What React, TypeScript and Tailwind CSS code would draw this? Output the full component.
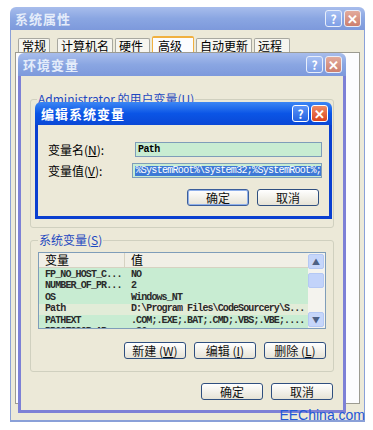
import type { ReactNode } from "react";

const cjk = { fontFamily: '"Noto Sans CJK SC", "Liberation Sans", sans-serif' };
const mono = { fontFamily: '"Liberation Mono", "Noto Sans CJK SC", monospace' };

function CaptionButtons({ active }: { active: boolean }) {
  return (
    <div className="flex gap-[2px]">
      <div
        className={
          active
            ? "flex h-[17px] w-[17px] items-center justify-center rounded-[3px] border border-white bg-gradient-to-b from-[#5a93f8] to-[#2462e0] text-[12px] font-bold leading-none text-white"
            : "flex h-[17px] w-[17px] items-center justify-center rounded-[3px] border border-[#e8eefa] bg-gradient-to-b from-[#a6bff2] to-[#7f9fe6] text-[12px] font-bold leading-none text-white"
        }
      >
        ?
      </div>
      <div
        className={
          active
            ? "flex h-[17px] w-[17px] items-center justify-center rounded-[3px] border border-white bg-gradient-to-b from-[#f08a62] to-[#d8421c] text-[13px] font-bold leading-none text-white"
            : "flex h-[17px] w-[17px] items-center justify-center rounded-[3px] border border-[#e8eefa] bg-gradient-to-b from-[#e3ab9c] to-[#cc7f6e] text-[13px] font-bold leading-none text-white"
        }
      >
        ✕
      </div>
    </div>
  );
}

function TitleBar({ title, active }: { title: string; active: boolean }) {
  return (
    <div
      className={
        active
          ? "flex h-[23px] shrink-0 items-center justify-between rounded-t-[6px] bg-gradient-to-b from-[#3c86f4] via-[#0b55e6] to-[#0a48d6] pl-[6px] pr-[4px]"
          : "flex h-[23px] shrink-0 items-center justify-between rounded-t-[6px] bg-gradient-to-b from-[#a8bdec] via-[#8aa6e2] to-[#7d99dc] pl-[5px] pr-[4px]"
      }
    >
      <span
        className={
          active
            ? "text-[13px] font-bold tracking-[1px] text-white"
            : "text-[13px] font-bold tracking-[1px] text-[#e4ecfa]"
        }
      >
        {title}
      </span>
      <CaptionButtons active={active} />
    </div>
  );
}

function XpButton({ children, className = "" }: { children: ReactNode; className?: string }) {
  return (
    <div
      className={
        "flex h-[17px] w-[62px] items-center justify-center rounded-[3px] border border-[#2f4f7f] bg-gradient-to-b from-[#ffffff] to-[#e6e3d6] text-[12px] leading-none text-[#111] " +
        className
      }
    >
      {children}
    </div>
  );
}

function Tab({ label, className = "" }: { label: string; className?: string }) {
  return (
    <div
      className={
        "h-[14px] rounded-t-[2px] border border-b-0 border-[#a8a8a0] bg-[#f6f5ef] px-[3px] pt-[1px] " +
        className
      }
    >
      {label}
    </div>
  );
}

const rows: [string, string][] = [
  ["FP_NO_HOST_C...", "NO"],
  ["NUMBER_OF_PR...", "2"],
  ["OS", "Windows_NT"],
  ["Path", "D:\\Program Files\\CodeSourcery\\S..."],
  ["PATHEXT", ".COM;.EXE;.BAT;.CMD;.VBS;.VBE;...."],
  ["PROCESSOR_AR...", "x86"],
];

export default function App() {
  return (
    <div className="relative h-[430px] w-[373px] overflow-hidden bg-white" style={cjk}>
      {/* 系统属性 (inactive, behind) */}
      <div className="absolute left-[10px] top-[7px] flex h-[415px] w-[355px] flex-col">
        <TitleBar title="系统属性" active={false} />
        <div className="flex flex-1 flex-col border-x border-b-2 border-[#8aa0d8] bg-[#ece9d8] px-[4px] pt-[6px]">
          <div className="flex items-end gap-[2px] pl-[3px] text-[12px] leading-none">
            <Tab label="常规" />
            <Tab label="计算机名" className="ml-[5px]" />
            <Tab label="硬件" className="w-[35px]" />
            <div className="h-[16px] w-[42px] rounded-t-[2px] border-x border-t-2 border-[#f0b040] bg-[#fcfcfe] pl-[5px] pt-[2px]">高级</div>
            <Tab label="自动更新" />
            <Tab label="远程" className="w-[36px]" />
          </div>
          <div className="h-[352px] border border-[#9c9b91] bg-[#fcfcfe]" />
        </div>
      </div>

      {/* 环境变量 (inactive) */}
      <div className="absolute left-[18px] top-[53px] flex h-[360px] w-[328px] flex-col">
        <TitleBar title="环境变量" active={false} />
        <div className="flex flex-1 flex-col border-x-[3px] border-b-[3px] border-[#7d80d6] bg-[#ece9d8] px-[9px]">
          <fieldset className="mt-[17px] h-[135px] rounded-[3px] border border-[#d0d0bf] px-[6px]">
            <legend className="px-[1px] text-[12px] leading-none text-[#1f48c0]">Administrator 的用户变量(U)</legend>
          </fieldset>
          <fieldset className="mt-[6px] flex h-[138px] flex-col rounded-[3px] border border-[#d0d0bf] px-[7px]">
            <legend className="px-[1px] text-[12px] leading-none text-[#1f48c0]">
              系统变量(<u>S</u>)
            </legend>
            <div className="mt-[6px] flex h-[77px] border border-[#7f9db9] bg-white">
              <div className="flex flex-1 flex-col overflow-hidden">
                <div className="flex h-[15px] shrink-0 items-center border-b border-[#d6d2c2] bg-[#f1efe6] text-[12px] leading-[14px]">
                  <div className="w-[86px] border-r border-[#d6d2c2] pl-[6px]">变量</div>
                  <div className="pl-[6px]">值</div>
                </div>
                <div className="bg-[#c8ecd2] pt-[1px] text-[10px] font-bold tracking-[-0.9px] text-[#2a2a2a]" style={mono}>
                  {rows.map(([k, v]) => (
                    <div
                      key={k}
                      className={
                        k === "Path"
                          ? "flex h-[11.5px] items-center bg-[#e2ecd8] leading-none"
                          : "flex h-[11.5px] items-center leading-none"
                      }
                    >
                      <div className="w-[86px] pl-[6px]">{k}</div>
                      <div className="pl-[6px]">{v}</div>
                    </div>
                  ))}
                </div>
              </div>
              <div className="flex w-[17px] flex-col justify-between bg-[#f4f3ee] pb-[1px] pr-[1px] pt-[1px]">
                <div className="flex flex-col gap-[4px]">
                  <div className="flex h-[15px] items-center justify-center rounded-[2px] border border-[#b4c8f4] bg-[#c6d6fa] text-[8px] text-[#4d6185]">▲</div>
                  <div className="h-[15px] rounded-[2px] border border-[#b4c8f4] bg-[#c2d3fa]" />
                </div>
                <div className="flex h-[15px] items-center justify-center rounded-[2px] border border-[#b4c8f4] bg-[#c6d6fa] text-[8px] text-[#4d6185]">▼</div>
              </div>
            </div>
            <div className="mt-[13px] flex justify-end gap-[8px]">
              <XpButton>
                新建 (<u>W</u>)
              </XpButton>
              <XpButton>
                编辑 (<u>I</u>)
              </XpButton>
              <XpButton>
                删除 (<u>L</u>)
              </XpButton>
            </div>
          </fieldset>
          <div className="mt-[11px] flex justify-end gap-[8px] pr-[1px]">
            <XpButton>确定</XpButton>
            <XpButton>取消</XpButton>
          </div>
        </div>
      </div>

      {/* 编辑系统变量 (active) */}
      <div className="absolute left-[35px] top-[102px] flex h-[117px] w-[297px] flex-col">
        <TitleBar title="编辑系统变量" active />
        <div className="flex flex-1 flex-col border-x-[3px] border-b-[3px] border-[#0a3fd0] bg-[#ece9d8] pl-[10px] pr-[7px] pt-[17px] text-[12px] leading-none">
          <div className="flex items-center">
            <div className="w-[87px]">
              变量名(<u>N</u>):
            </div>
            <div className="flex h-[15px] flex-1 items-center border border-[#7f9db9] bg-[#c8ecd2] pl-[2px] text-[10px] font-bold tracking-[-0.6px]" style={mono}>
              Path
            </div>
          </div>
          <div className="mt-[6px] flex items-center">
            <div className="w-[87px]">
              变量值(<u>V</u>):
            </div>
            <div className="flex h-[15px] flex-1 items-center border border-[#7f9db9] bg-[#c8ecd2] pl-[2px] text-[10px] tracking-[-0.7px]" style={mono}>
              <span className="bg-[#3e79d6] text-white">%SystemRoot%\system32;%SystemRoot%;</span>
            </div>
          </div>
          <div className="mt-[11px] flex justify-end gap-[8px] pr-[3px]">
            <XpButton className="border-[#3c5e9a] shadow-[inset_0_0_0_1px_#8fb0ea]">确定</XpButton>
            <XpButton>取消</XpButton>
          </div>
        </div>
      </div>

      <div className="absolute bottom-[8px] right-[8px] text-[14px] leading-none text-[#2457d6]" style={{ fontFamily: '"Liberation Sans", sans-serif' }}>
        EEChina.com
      </div>
    </div>
  );
}
